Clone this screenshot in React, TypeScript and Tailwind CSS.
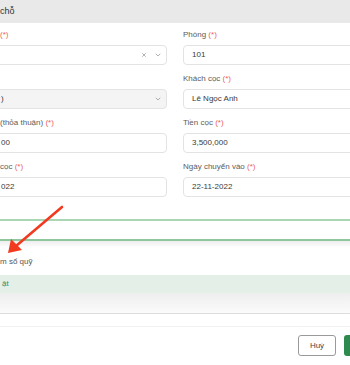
import { ChevronDown, X } from "lucide-react";

const Req = () => <span className="text-[#ec5f5f]">(*)</span>;

const Label = ({ children, left }: { children: React.ReactNode; left?: boolean }) => (
  <div className={`h-[14px] mb-[3px] text-[8px] leading-[14px] text-[#5c5c5c] whitespace-nowrap ${left ? "pl-[33px]" : ""}`}>
    {children}
  </div>
);

const Field = ({
  value,
  left,
  disabled,
  select,
  clear,
}: {
  value: string;
  left?: boolean;
  disabled?: boolean;
  select?: boolean;
  clear?: boolean;
}) => (
  <div
    className={`h-[20px] flex items-center rounded-[4px] border border-[#e3e3e3] text-[8px] text-[#3a3a3a] whitespace-nowrap ${
      disabled ? "bg-[#f4f4f4]" : "bg-white"
    } ${left ? "pl-[33px]" : "pl-[8px]"} pr-[4px]`}
  >
    <span className="flex-1">{value}</span>
    {clear && <X size={6} strokeWidth={3} className="text-[#9a9a9a] mr-[7px]" />}
    {select && <ChevronDown size={8} strokeWidth={2} className="text-[#8a8a8a]" />}
  </div>
);

export default function App() {
  return (
    <div className="w-[350px] h-[365px] overflow-hidden relative bg-white font-['Liberation_Sans',Arial,sans-serif]">
      <div className="h-[23px] bg-[#e9e9e9] flex items-center text-[9px] text-[#333]">chỗ</div>

      <div className="-ml-[33px] pt-[5px] grid grid-cols-[200px_200px] gap-x-4 gap-y-[7px]">
        <div>
          <Label left><Req /></Label>
          <Field value="" left select clear />
        </div>
        <div>
          <Label>Phòng <Req /></Label>
          <Field value="101" />
        </div>
        <div>
          <Label left>{""}</Label>
          <Field value=")" left disabled select />
        </div>
        <div>
          <Label>Khách cọc <Req /></Label>
          <Field value="Lê Ngọc Anh" />
        </div>
        <div>
          <Label left>(thỏa thuận) <Req /></Label>
          <Field value="00" left />
        </div>
        <div>
          <Label>Tiền cọc <Req /></Label>
          <Field value="3,500,000" />
        </div>
        <div>
          <Label left>cọc <Req /></Label>
          <Field value="022" left />
        </div>
        <div>
          <Label>Ngày chuyển vào <Req /></Label>
          <Field value="22-11-2022" />
        </div>
      </div>

      <div className="mt-[22px] h-[22px] border-t-2 border-b-2 border-t-[#a9d6b5] border-b-[#8ec79d] bg-white" />
      <div className="h-[7px] bg-gradient-to-b from-[#eeeeee] to-white" />

      <div className="h-[27px] flex items-center text-[8px] text-[#555] pt-[1px]">m sổ quỹ</div>

      <div className="h-[18px] bg-[#e4efe8] flex items-center pl-[2px] text-[8px] text-[#3b8a58]">ật</div>
      <div className="h-[21px] bg-gradient-to-b from-[#eeeeee] to-[#fbfbfb] border-b border-[#dedede]" />
      <div className="h-[13px] border-b border-[#f1f1f1]" />

      <div className="flex justify-end gap-[8px] pt-[8px] -mr-[20px]">
        <button className="w-[38px] h-[21px] rounded-[3px] border border-[#9a9a9a] bg-white text-[8px] text-[#444]">
          Huỷ
        </button>
        <button className="w-[26px] h-[21px] rounded-[3px] bg-[#2f8a4f]" />
      </div>

      <svg className="absolute left-0 top-0" width="350" height="365" viewBox="0 0 350 365">
        <line x1="62" y1="207" x2="16" y2="246" stroke="#f23a1f" strokeWidth="2.6" strokeLinecap="round" />
        <polygon points="8,253 11,239 22,250" fill="#f23a1f" />
      </svg>
    </div>
  );
}
